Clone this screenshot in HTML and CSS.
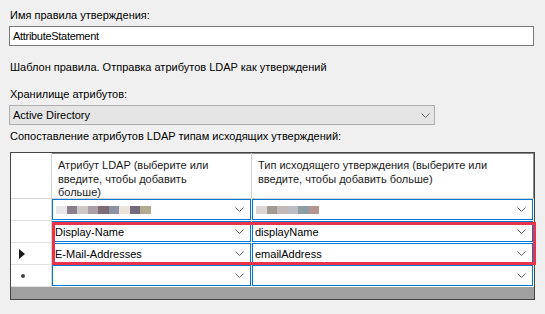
FILE: index.html
```html
<!DOCTYPE html>
<html lang="ru">
<head>
<meta charset="utf-8">
<link rel="stylesheet" href="styles.css">
</head>
<body>
<div class="page">
  <div class="label l1">Имя правила утверждения:</div>
  <div class="textbox">AttributeStatement</div>
  <div class="label l2">Шаблон правила. Отправка атрибутов LDAP как утверждений</div>
  <div class="label l3">Хранилище атрибутов:</div>
  <div class="select">
    <span>Active Directory</span>
    <svg class="chev" width="9" height="5" viewBox="0 0 9 5"><path d="M0.5 0.5 L4.5 4.5 L8.5 0.5" fill="none" stroke="#606060" stroke-width="1"/></svg>
  </div>
  <div class="label l4">Сопоставление атрибутов LDAP типам исходящих утверждений:</div>
  <div class="grid">
    <div class="rh hdr"></div>
    <div class="hcell">Атрибут LDAP (выберите или<br>введите, чтобы добавить<br>больше)</div>
    <div class="hcell last">Тип исходящего утверждения (выберите или<br>введите, чтобы добавить больше)</div>

    <div class="rh"></div>
    <div class="cell"><div class="combo"><span class="blur">
      <i style="background:#ebe6ec"></i><i style="background:#8c7f8c"></i><i style="background:#cfc8c6"></i><i style="background:#ab9ea6"></i><i style="background:#7c6c74"></i><i style="background:#8a92a4"></i><i style="background:#ece4da"></i><i style="background:#716a7c"></i><i style="background:#b4aa8e"></i>
    </span><svg class="chev" width="9" height="5" viewBox="0 0 9 5"><path d="M0.5 0.5 L4.5 4.5 L8.5 0.5" fill="none" stroke="#606060" stroke-width="1"/></svg></div></div>
    <div class="cell last"><div class="combo"><span class="blur">
      <i style="background:#ddd6d4"></i><i style="background:#a39a92"></i><i style="background:#c4b8b8"></i><i style="background:#bcbcc4"></i><i style="background:#8e9ea6"></i><i style="background:#b4968e"></i>
    </span><svg class="chev" width="9" height="5" viewBox="0 0 9 5"><path d="M0.5 0.5 L4.5 4.5 L8.5 0.5" fill="none" stroke="#606060" stroke-width="1"/></svg></div></div>

    <div class="rh"></div>
    <div class="cell"><div class="combo"><span>Display-Name</span><svg class="chev" width="9" height="5" viewBox="0 0 9 5"><path d="M0.5 0.5 L4.5 4.5 L8.5 0.5" fill="none" stroke="#606060" stroke-width="1"/></svg></div></div>
    <div class="cell last"><div class="combo"><span>displayName</span><svg class="chev" width="9" height="5" viewBox="0 0 9 5"><path d="M0.5 0.5 L4.5 4.5 L8.5 0.5" fill="none" stroke="#606060" stroke-width="1"/></svg></div></div>

    <div class="rh"><svg width="6" height="10" viewBox="0 0 6 10"><path d="M0 0 L6 5 L0 10 Z" fill="#1a1a1a"/></svg></div>
    <div class="cell"><div class="combo"><span>E-Mail-Addresses</span><svg class="chev" width="9" height="5" viewBox="0 0 9 5"><path d="M0.5 0.5 L4.5 4.5 L8.5 0.5" fill="none" stroke="#606060" stroke-width="1"/></svg></div></div>
    <div class="cell last"><div class="combo"><span>emailAddress</span><svg class="chev" width="9" height="5" viewBox="0 0 9 5"><path d="M0.5 0.5 L4.5 4.5 L8.5 0.5" fill="none" stroke="#606060" stroke-width="1"/></svg></div></div>

    <div class="rh"><span class="star"></span></div>
    <div class="cell"><div class="combo"><span></span><svg class="chev" width="9" height="5" viewBox="0 0 9 5"><path d="M0.5 0.5 L4.5 4.5 L8.5 0.5" fill="none" stroke="#606060" stroke-width="1"/></svg></div></div>
    <div class="cell last"><div class="combo"><span></span><svg class="chev" width="9" height="5" viewBox="0 0 9 5"><path d="M0.5 0.5 L4.5 4.5 L8.5 0.5" fill="none" stroke="#606060" stroke-width="1"/></svg></div></div>

    <div class="empty"></div>
    <div class="mark"></div>
  </div>
</div>
</body>
</html>
```
FILE: styles.css
```css
html, body {
  margin: 0;
  padding: 0;
  background: #f0f0f0;
}
body {
  font-family: "Liberation Sans", Arial, sans-serif;
  font-size: 11px;
  color: #000;
}
.page {
  width: 545px;
  height: 314px;
  padding: 0 0 0 9px;
  box-sizing: border-box;
  display: flex;
  flex-direction: column;
  align-items: flex-start;
}
.label {
  line-height: 15px;
  height: 15px;
  padding-left: 1px;
  white-space: nowrap;
}
.l1 { margin-top: 8px; }
.l2 { margin-top: 14px; }
.l3 { margin-top: 12px; }
.l4 { margin-top: 4px; }
.textbox {
  margin-top: 3px;
  width: 525px;
  height: 20px;
  box-sizing: border-box;
  border: 1px solid #7a7a7a;
  background: #fff;
  padding: 0 3px;
  line-height: 18px;
  letter-spacing: -0.3px;
}
.select {
  margin-top: 3px;
  width: 426px;
  height: 20px;
  box-sizing: border-box;
  border: 1px solid #adadad;
  background: #e5e5e5;
  padding: 0 4px 0 3px;
  display: flex;
  align-items: center;
  justify-content: space-between;
}
.grid {
  margin-top: 8px;
  margin-left: 1px;
  position: relative;
  width: 525px;
  box-sizing: border-box;
  border: 1px solid #444;
  box-shadow: inset 0 0 0 1px #8a8a8a;
  background: #fff;
  display: grid;
  grid-template-columns: 41px 200px 282px;
  grid-template-rows: 46px 22px 22px 22px 22px 12px;
}
.rh {
  background: #fff;
  border-right: 1px solid #d4d4d4;
  border-bottom: 1px solid #e2e2e2;
  display: flex;
  align-items: center;
  padding-left: 8px;
  box-sizing: border-box;
}
.rh.hdr { border-bottom-color: #d4d4d4; }
.hcell {
  padding: 6px 6px 0 6px;
  line-height: 13.5px;
  border-right: 1px solid #d4d4d4;
  border-bottom: 1px solid #d4d4d4;
  box-sizing: border-box;
  white-space: nowrap;
  color: #1a1a1a;
}
.last { border-right: none; }
.cell {
  box-sizing: border-box;
  padding: 0 1px 1px 0;
  background: #fff;
}
.combo {
  height: 100%;
  box-sizing: border-box;
  border: 1px solid #0078d7;
  background: #fff;
  display: flex;
  align-items: center;
  justify-content: space-between;
  padding: 0 6px 0 2px;
}
.blur {
  display: flex;
  height: 8px;
  margin-left: 1px;
  filter: blur(0.6px);
}
.blur i {
  display: block;
  width: 10.5px;
  height: 8px;
}
.star {
  display: block;
  width: 4px;
  height: 4px;
  border-radius: 50%;
  background: #444;
  margin-left: 2px;
}
.empty {
  grid-column: 1 / 4;
  background: #a0a0a0;
}
.mark {
  position: absolute;
  left: 41px;
  top: 69px;
  width: 484px;
  height: 43px;
  box-sizing: border-box;
  border: 3px solid #e8334a;
  pointer-events: none;
}
```
